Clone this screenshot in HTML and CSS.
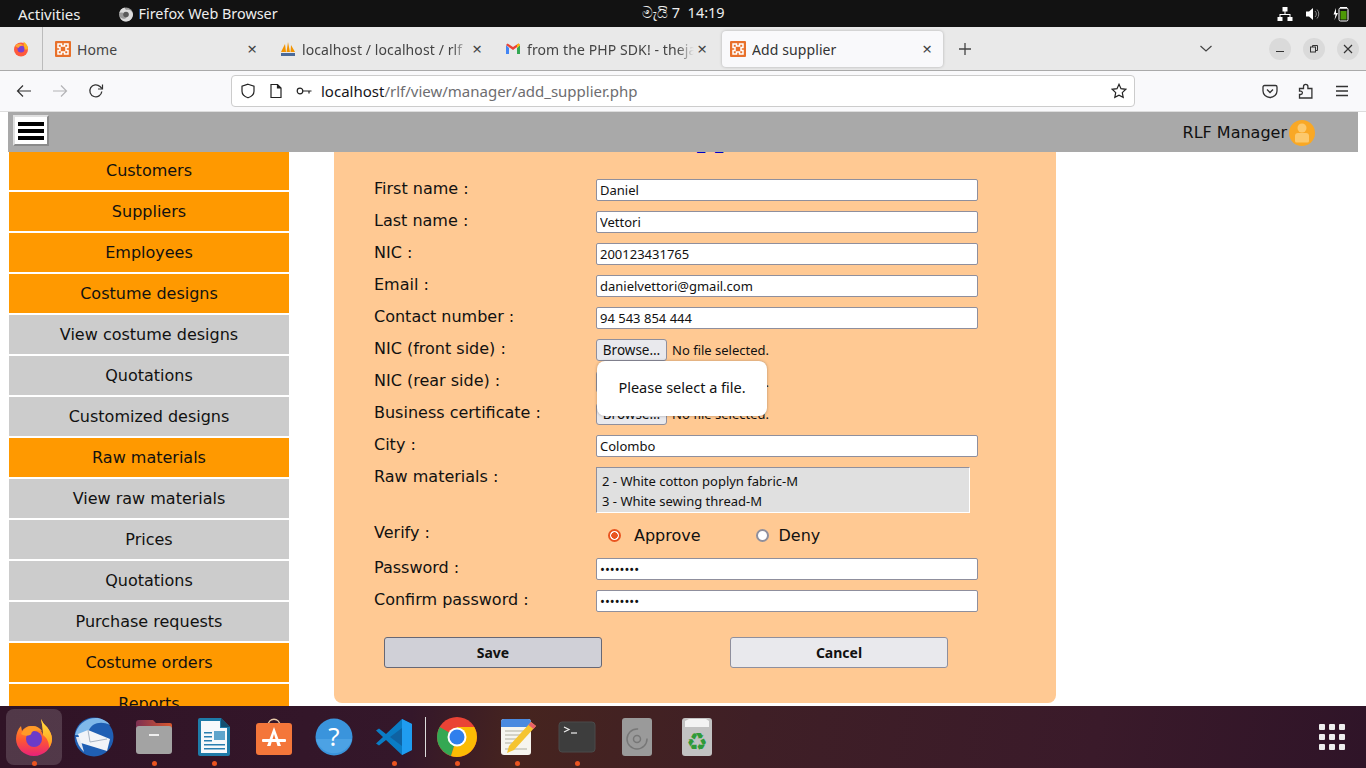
FILE: index.html
```html
<!DOCTYPE html>
<html lang="en">
  <head>
    <meta charset="UTF-8">
    <meta name="viewport" content="width=device-width, initial-scale=1.0">
    <title>Add supplier</title>
    <link rel="stylesheet" href="styles.css">
  </head>
<body>
  <!-- desktop top bar -->
  <div class="topbar">
    <div class="topbar-left">
      <span class="activities">Activities</span>
      <span class="app-name">
        <svg class="app-glyph" width="16" height="16" viewBox="0 0 16 16"><circle cx="8" cy="8.500" r="7" fill="#9a9a9a"/><path d="M1.500 7C2 4 4 2 6.500 1.500 7 3 7.500 3.500 8.500 4 11 3 14 4.500 15 8c0 4-3 7.500-7 7.500-3 0-5.500-2-6-4.500 2 2 5 2.500 6.500.500C9.500 10 8 8.500 6 8.500 6 7 5 6 1.500 7z" fill="#dcdcdc"/><circle cx="8" cy="8.500" r="2.800" fill="#5a5a5a"/></svg>
        Firefox Web Browser
      </span>
    </div>
    <div class="clock">මැයි 7&nbsp;&nbsp;14:19</div>
    <div class="tray">
      <svg width="16" height="16" viewBox="0 0 16 16" fill="#fff"><rect x="5.500" y="1" width="5" height="4.500"/><rect x="0.500" y="11" width="5" height="4"/><rect x="10.500" y="11" width="5" height="4"/><path d="M7.500 5h1v3h5v3h-1V9h-9v2h-1V8h5z"/></svg>
      <svg width="16" height="16" viewBox="0 0 16 16" fill="#fff"><path d="M1 5.500h3L8 2v12l-4-3.500H1z"/><path d="M10 5a4 4 0 0 1 0 6M12 3.500a6.500 6.500 0 0 1 0 9" fill="none" stroke="#888" stroke-width="1"/></svg>
      <svg width="16" height="16" viewBox="0 0 16 16"><path d="M3 2L0.500 8.500h2L1.500 14 5 7H3z" fill="#fff"/><rect x="6" y="2" width="9" height="13" rx="1.500" fill="none" stroke="#fff"/><rect x="7" y="1" width="7" height="1.500" fill="#fff"/><rect x="7.500" y="5" width="6" height="8.500" fill="#4e9a06"/></svg>
    </div>
  </div>

  <!-- browser tab strip -->
  <div class="tabstrip">
    <div class="fx-button">
      <svg width="16" height="16" viewBox="0 0 16 16"><circle cx="8" cy="8.500" r="7" fill="#ff5a3c"/><path d="M10.500 .5c3 2 5 5 4.500 8h-4z" fill="#ffb01f"/><circle cx="8" cy="8" r="3.500" fill="#7b3fd0"/><path d="M2 5c2-2.500 6-3 8.500-.5-3 0-4.500 1-5 2.500z" fill="#ffa436"/></svg>
    </div>
    <div class="tab">
      <svg class="fav" width="16" height="16" viewBox="0 0 16 16"><rect width="16" height="16" rx="1" fill="#e8702a"/><path d="M3 3h3.500v2h3V3H13v3.500h-2v3h2V13H9.500v-2h-3v2H3V9.500h2v-3H3z" fill="none" stroke="#fff" stroke-width="1.500"/></svg>
      <span class="tab-title">Home</span>
      <span class="tab-close">×</span>
    </div>
    <div class="tab">
      <svg class="fav" width="16" height="16" viewBox="0 0 16 16"><path d="M1 11L5 3l1 8zM6.500 11L8 1l2 10zM10.500 11L11 4l4 7z" fill="#f29400"/><rect x="1" y="12" width="14" height="3" fill="#4a6a9a"/></svg>
      <span class="tab-title fade">localhost / localhost / rlf |</span>
      <span class="tab-close">×</span>
    </div>
    <div class="tab">
      <svg class="fav" width="16" height="16" viewBox="0 0 16 16"><path d="M1 4v9h3V7z" fill="#4285f4"/><path d="M12 7v6h3V4z" fill="#34a853"/><path d="M1 4l7 5 7-5-1.500-1.500L8 6 2.500 2.500z" fill="#ea4335"/><path d="M12 7l3-3-1.500-1.500L12 3.700z" fill="#fbbc04"/></svg>
      <span class="tab-title fade">from the PHP SDK! - theja</span>
      <span class="tab-close">×</span>
    </div>
    <div class="tab active">
      <svg class="fav" width="16" height="16" viewBox="0 0 16 16"><rect width="16" height="16" rx="1" fill="#e8702a"/><path d="M3 3h3.500v2h3V3H13v3.500h-2v3h2V13H9.500v-2h-3v2H3V9.500h2v-3H3z" fill="none" stroke="#fff" stroke-width="1.500"/></svg>
      <span class="tab-title">Add supplier</span>
      <span class="tab-close">×</span>
    </div>
    <div class="new-tab">
      <svg width="14" height="14" viewBox="0 0 14 14" stroke="#444" stroke-width="1.300"><path d="M7 1v12M1 7h12"/></svg>
    </div>
    <div class="tab-list">
      <svg width="14" height="8" viewBox="0 0 14 8" fill="none" stroke="#444" stroke-width="1.200"><path d="M1.500 1l5.500 5 5.500-5"/></svg>
    </div>
    <div class="window-buttons">
      <span class="win-btn"><svg width="10" height="10" viewBox="0 0 10 10" stroke="#333"><path d="M1 7.500h8"/></svg></span>
      <span class="win-btn"><svg width="10" height="10" viewBox="0 0 10 10" fill="none" stroke="#333"><rect x="1.500" y="3" width="5" height="5"/><path d="M3.500 3V1.500h5v5H6.500"/></svg></span>
      <span class="win-btn"><svg width="10" height="10" viewBox="0 0 10 10" stroke="#333" stroke-width="1.200"><path d="M1 1l8 8M9 1l-8 8"/></svg></span>
    </div>
  </div>

  <!-- browser toolbar -->
  <div class="toolbar">
    <div class="nav-buttons">
      <svg width="16" height="16" viewBox="0 0 16 16" fill="none" stroke="#333" stroke-width="1.200"><path d="M15 8H1.500M7 2.500L1.500 8 7 13.500"/></svg>
      <svg width="16" height="16" viewBox="0 0 16 16" fill="none" stroke="#b4b4b6" stroke-width="1.200"><path d="M1 8h13.500M9 2.500L14.500 8 9 13.500"/></svg>
      <svg width="16" height="16" viewBox="0 0 16 16" fill="none" stroke="#333" stroke-width="1.300"><path d="M13.800 8.500A6 6 0 1 1 12 3.500L14 5.500"/><path d="M14.500 1.500v4.500h-4.500" stroke-width="1.200"/></svg>
    </div>
    <div class="urlbar">
      <svg width="16" height="16" viewBox="0 0 16 16" fill="none" stroke="#222" stroke-width="1.200"><path d="M8 1.200l6 2v5c0 3-3 5.500-6 6.600-3-1.100-6-3.600-6-6.600v-5z"/></svg>
      <svg width="16" height="16" viewBox="0 0 16 16" fill="none" stroke="#222" stroke-width="1.200"><path d="M3 1.500h6.500L13 5v9.500H3z"/><path d="M9.500 1.500V5H13" fill="#222"/></svg>
      <svg width="16" height="16" viewBox="0 0 16 16" fill="none" stroke="#222" stroke-width="1.200"><circle cx="4" cy="8" r="2.800"/><path d="M7 8h8.500M13 8v2.500"/></svg>
      <span class="url"><span class="url-host">localhost</span>/rlf/view/manager/add_supplier.php</span>
      <svg class="url-star" width="16" height="16" viewBox="0 0 16 16" fill="none" stroke="#222" stroke-width="1.200"><path d="M8 1.300l2 4.400 4.800.6-3.500 3.300.9 4.800L8 12.100l-4.200 2.300.9-4.800L1.200 6.300 6 5.700z"/></svg>
    </div>
    <div class="toolbar-right">
      <svg width="16" height="16" viewBox="0 0 16 16" fill="none" stroke="#333" stroke-width="1.300"><path d="M2.500 2.500h11a1.500 1.500 0 0 1 1.500 1.500v4a7 6.500 0 0 1-14 0V4a1.500 1.500 0 0 1 1.500-1.500z"/><path d="M5 6.500l3 3 3-3"/></svg>
      <svg width="16" height="16" viewBox="0 0 16 16" fill="none" stroke="#333" stroke-width="1.300"><path d="M1.500 5.500h4v-2a2.200 2.200 0 0 1 4.400 0v2h4v9.500H1.500v-3.500h1.200a1.700 1.700 0 0 0 0-3.400H1.500z"/></svg>
      <svg width="16" height="16" viewBox="0 0 16 16" stroke="#333" stroke-width="1.300"><path d="M2 3.500h12M2 8h12M2 12.500h12"/></svg>
    </div>
  </div>

  <!-- page content -->
  <div class="viewport">
    <header class="site-header">
      <button class="menu-toggle" type="button"><span></span><span></span><span></span></button>
      <div class="user">
        <span>RLF Manager</span>
        <span class="avatar">
          <svg width="18" height="20" viewBox="0 0 18 20" fill="#fcc96d"><circle cx="9" cy="5" r="4.500"/><path d="M2 18v-5a3 3 0 0 1 3-3h8a3 3 0 0 1 3 3v5a1.500 1.500 0 0 1-1.500 1.500h-11A1.500 1.500 0 0 1 2 18z"/></svg>
        </span>
      </div>
    </header>

    <div class="columns">
      <nav class="sidebar">
        <a class="side-link main">Customers</a>
        <a class="side-link main">Suppliers</a>
        <a class="side-link main">Employees</a>
        <a class="side-link main">Costume designs</a>
        <a class="side-link">View costume designs</a>
        <a class="side-link">Quotations</a>
        <a class="side-link">Customized designs</a>
        <a class="side-link main">Raw materials</a>
        <a class="side-link">View raw materials</a>
        <a class="side-link">Prices</a>
        <a class="side-link">Quotations</a>
        <a class="side-link">Purchase requests</a>
        <a class="side-link main">Costume orders</a>
        <a class="side-link main">Reports</a>
      </nav>

      <main class="panel">
        <h2 class="panel-title">Add supplier</h2>
        <form class="supplier-form">
          <div class="row">
            <label>First name :</label>
            <input type="text" value="Daniel">
          </div>
          <div class="row">
            <label>Last name :</label>
            <input type="text" value="Vettori">
          </div>
          <div class="row">
            <label>NIC :</label>
            <input type="text" value="200123431765">
          </div>
          <div class="row">
            <label>Email :</label>
            <input type="text" value="danielvettori@gmail.com">
          </div>
          <div class="row">
            <label>Contact number :</label>
            <input type="text" value="94 543 854 444">
          </div>
          <div class="row">
            <label>NIC (front side) :</label>
            <div class="file-field">
              <button class="browse" type="button">Browse…</button>
              <span>No file selected.</span>
              <div class="file-tip">Please select a file.</div>
            </div>
          </div>
          <div class="row">
            <label>NIC (rear side) :</label>
            <div class="file-field">
              <button class="browse" type="button">Browse…</button>
              <span>No file selected.</span>
            </div>
          </div>
          <div class="row">
            <label>Business certificate :</label>
            <div class="file-field">
              <button class="browse" type="button">Browse…</button>
              <span>No file selected.</span>
            </div>
          </div>
          <div class="row">
            <label>City :</label>
            <input type="text" value="Colombo">
          </div>
          <div class="row">
            <label>Raw materials :</label>
            <div class="listbox">
              <div>2 - White cotton poplyn fabric-M</div>
              <div>3 - White sewing thread-M</div>
            </div>
          </div>
          <div class="row verify-row">
            <label>Verify :</label>
            <div class="radios">
              <span class="radio-item approve"><span class="radio on"></span>Approve</span>
              <span class="radio-item deny"><span class="radio"></span>Deny</span>
            </div>
          </div>
          <div class="row">
            <label>Password :</label>
            <input type="password" value="daniel12">
          </div>
          <div class="row">
            <label>Confirm password :</label>
            <input type="password" value="daniel12">
          </div>
          <div class="form-actions">
            <button class="action hover" type="button">Save</button>
            <button class="action" type="button">Cancel</button>
          </div>
        </form>
      </main>
    </div>
  </div>

  <!-- desktop dock -->
  <div class="dock">
    <div class="dock-item focused running">
      <svg width="36" height="38" viewBox="0 0 36 38"><defs><linearGradient id="fx" x1="0" y1="0" x2="0" y2="1"><stop offset="0" stop-color="#ffb020"/><stop offset=".55" stop-color="#ff5a30"/><stop offset="1" stop-color="#e8207a"/></linearGradient><linearGradient id="fxtop" x1="0" y1="0" x2="0" y2="1"><stop offset="0" stop-color="#ffe040"/><stop offset="1" stop-color="#ff9a1c"/></linearGradient></defs><path d="M25 1c2 4 3 5 6 8 3 4 5 8 5 12 0 9-8 17-18 17S0 30 0 21C0 16 2 11 5 8l1 5c2-3 5-5 9-5 6 0 11 4 12 9 0-6-1-11-2-16z" fill="url(#fx)"/><path d="M25 1c2 4 3 5 6 8 3 4 5 8 5 12 0 3-1 6-3 9 0-6-2-10-6-13 0-6-1-11-2-16z" fill="url(#fxtop)"/><circle cx="18" cy="21" r="8" fill="#6b3bc9"/><path d="M5 16c2-5 7-8 12-8 4 0 7 2 9 5-4-1-8-1-10 1-1 1 0 2-2 3-3 1-6 1-9-1z" fill="#ff9a28"/></svg>
    </div>
    <div class="dock-item">
      <svg width="40" height="40" viewBox="0 0 40 40"><circle cx="20" cy="20" r="19.500" fill="#1f5fb4"/><path d="M1 18C3 8 12 0 24 1c5 1 9 3 12 7-6-3-12-3-17 0-4 3-5 7-5 10z" fill="#7fb8ea"/><path d="M2 20c1 6 4 11 8 15h0l-4-15z" fill="#dfe6f2"/><path d="M4 17l10-4 22 9-3 12-26-8z" fill="#f2f4f8"/><path d="M14 13l2 12 17-3" fill="none" stroke="#a8b4c4"/></svg>
    </div>
    <div class="dock-item running">
      <svg width="38" height="36" viewBox="0 0 38 36"><defs><linearGradient id="folder" x1="0" y1="0" x2="1" y2="0"><stop offset="0" stop-color="#7c2f52"/><stop offset="1" stop-color="#d9572e"/></linearGradient></defs><path d="M1 4a3 3 0 0 1 3-3h14l3 3h14a2 2 0 0 1 2 2v10H1z" fill="url(#folder)"/><rect x="1" y="7" width="36" height="28" rx="3" fill="#a3a3a3"/><rect x="14" y="15" width="10" height="2" fill="#eee"/></svg>
    </div>
    <div class="dock-item running">
      <svg width="32" height="38" viewBox="0 0 32 38"><path d="M2 0h21l9 9v27a2 2 0 0 1-2 2H2a2 2 0 0 1-2-2V2a2 2 0 0 1 2-2z" fill="#1e7ba8"/><path d="M3 3h19v7h7v25H3z" fill="#f7f9fb"/><path d="M23 0l9 9h-9z" fill="#124f70"/><rect x="6" y="14" width="8" height="1.500" fill="#2a7fb0"/><rect x="6" y="18" width="8" height="1.500" fill="#2a7fb0"/><rect x="6" y="22" width="8" height="1.500" fill="#2a7fb0"/><rect x="16" y="13" width="11" height="9" fill="#5fa5cc"/><rect x="6" y="26" width="21" height="1.500" fill="#2a7fb0"/><rect x="6" y="30" width="21" height="1.500" fill="#2a7fb0"/></svg>
    </div>
    <div class="dock-item">
      <svg width="38" height="38" viewBox="0 0 38 38"><path d="M13 8c0-9 12-9 12 0" fill="none" stroke="#e8c9a8" stroke-width="1.500"/><rect x="1" y="5" width="36" height="32" rx="3" fill="#f4763a"/><path d="M19 9l-7 19h3.500L19 16l3.500 12H26z" fill="#fff"/><rect x="7" y="21" width="24" height="3" rx="1" fill="#fff"/></svg>
    </div>
    <div class="dock-item">
      <svg width="38" height="38" viewBox="0 0 38 38"><circle cx="19" cy="19" r="18.500" fill="#3a94dc"/><path d="M1 21h36a18.500 18.500 0 0 1-36 0z" fill="#4ca2e4"/><text class="dock-help" x="19" y="28" text-anchor="middle">?</text></svg>
    </div>
    <div class="dock-item running">
      <svg width="36" height="36" viewBox="0 0 36 36"><path d="M26 0l10 5v26l-10 5-16-15-7 5.500L0 24.500 7 18 0 11.500 3 9.500 10 15z" fill="#0a7cc4"/><path d="M26 9L14 18l12 9z" fill="#0f5f9f" opacity=".9"/><path d="M26 0l10 5v26l-10 5z" fill="#1f9cf0"/></svg>
    </div>
    <span class="dock-sep"></span>
    <div class="dock-item running">
      <svg width="40" height="40" viewBox="0 0 40 40"><circle cx="20" cy="20" r="20" fill="#ea4335"/><path d="M20 20L2.700 10A20 20 0 0 0 14 39z" fill="#34a853"/><path d="M20 10h17.300A20 20 0 0 1 14 39l6-19z" fill="#fbbc04"/><circle cx="20" cy="20" r="9.500" fill="#fff"/><circle cx="20" cy="20" r="7.500" fill="#2f7fed"/></svg>
    </div>
    <div class="dock-item running">
      <svg width="38" height="38" viewBox="0 0 38 38"><rect x="3" y="1" width="30" height="36" rx="3" fill="#f6f5ef"/><path d="M3 9V4a3 3 0 0 1 3-3h24a3 3 0 0 1 3 3v5z" fill="#4a8ae0"/><path d="M7 13h22M7 17h16M7 21h12M7 25h8M7 31h22" stroke="#c8c6ba" stroke-width="1.500"/><path d="M33 4l5 4-22 24-7 3 2-7z" fill="#f5c430"/><path d="M33 4l5 4-2.500 3-5-4z" fill="#e8606a"/></svg>
    </div>
    <div class="dock-item running">
      <svg width="38" height="32" viewBox="0 0 38 32"><rect x="1" y="1" width="36" height="30" rx="3" fill="#3d3d3d" stroke="#4a4a4a"/><path d="M6 6l5 2.500-5 2.500" fill="none" stroke="#eee" stroke-width="1.200"/><path d="M13 12h6" stroke="#eee" stroke-width="1.200"/></svg>
    </div>
    <div class="dock-item">
      <svg width="32" height="38" viewBox="0 0 32 38"><rect width="30" height="38" x="1" rx="3" fill="#9a9a9a"/><circle cx="16" cy="21" r="10" fill="none" stroke="#777" stroke-width="1.500" stroke-dasharray="48 14"/><circle cx="16" cy="21" r="3.500" fill="none" stroke="#777" stroke-width="1.500"/></svg>
    </div>
    <div class="dock-item">
      <svg width="32" height="38" viewBox="0 0 32 38"><rect x="1" width="30" height="38" rx="3" fill="#c2c2c2"/><path d="M4 9V3l4-2h17l3 2v6z" fill="#f3f3f3"/><text class="dock-recycle" x="16" y="32" text-anchor="middle">♻</text></svg>
    </div>
    <div class="app-grid">
      <span></span><span></span><span></span>
      <span></span><span></span><span></span>
      <span></span><span></span><span></span>
    </div>
  </div>
</body>
</html>
```

FILE: styles.css
```css
html,
body {
  margin: 0;
  height: 100%;
  overflow: hidden;
}
body {
  display: flex;
  flex-direction: column;
  height: 768px;
  font-family: "Noto Sans", "DejaVu Sans", sans-serif;
  color: #111;
  background-color: #fff;
}

/* desktop top bar */
.topbar {
  display: flex;
  align-items: center;
  height: 27px;
  flex: none;
  padding: 0 17px 0 18px;
  background-color: #121212;
  color: #eee;
  font-size: 14.4px;
}
.topbar-left {
  display: flex;
  align-items: center;
  width: 624px;
  gap: 37px;
}
.activities {
  font-size: 15px;
}
.app-name {
  display: flex;
  align-items: center;
  gap: 5px;
}
.clock {
  font-size: 14.5px;
  margin-top: -3px;
}
.tray {
  display: flex;
  align-items: center;
  gap: 12px;
  margin-left: auto;
}

/* tab strip */
.tabstrip {
  display: flex;
  align-items: center;
  height: 44px;
  flex: none;
  padding-top: 1px;
  box-sizing: border-box;
  background-color: #e9e9e9;
  border-bottom: 1px solid #aaa;
  font-size: 14px;
  color: #444;
}
.fx-button {
  display: flex;
  justify-content: center;
  align-items: center;
  align-self: stretch;
  width: 42px;
  margin-top: -1px;
  margin-right: 2px;
  border-right: 1px solid #bbb;
}
.tab {
  display: flex;
  align-items: center;
  gap: 6px;
  width: 221px;
  height: 36px;
  margin: 0 2px;
  padding: 0 8px;
  box-sizing: border-box;
}
.tab.active {
  background-color: #f9f9fb;
  border-radius: 4px;
  box-shadow: 0 0 3px rgba(0, 0, 0, .25);
  color: #333;
}
.fav {
  flex: none;
}
.tab-title {
  flex: 1;
  overflow: hidden;
  white-space: nowrap;
  letter-spacing: .1px;
}
.tab-title.fade {
  margin-right: -6px;
  mask-image: linear-gradient(to right, #000 90%, transparent);
}
.tab-close {
  flex: none;
  width: 16px;
  text-align: center;
  font-size: 17px;
  line-height: 16px;
  color: #444;
}
.new-tab {
  display: flex;
  margin-left: 13px;
}
.tab-list {
  display: flex;
  margin-left: 227px;
}
.window-buttons {
  display: flex;
  gap: 12px;
  margin-left: 56px;
}
.win-btn {
  display: flex;
  justify-content: center;
  align-items: center;
  width: 22px;
  height: 22px;
  border-radius: 50%;
  background-color: #dadada;
}

/* toolbar */
.toolbar {
  display: flex;
  align-items: center;
  height: 40px;
  flex: none;
  background-color: #f9f9fb;
  border-bottom: 1px solid #ddd;
}
.nav-buttons {
  display: flex;
  gap: 20px;
  padding-left: 16px;
  width: 231px;
  box-sizing: border-box;
}
.urlbar {
  display: flex;
  align-items: center;
  gap: 12px;
  width: 904px;
  height: 32px;
  padding: 0 7px 0 8px;
  box-sizing: border-box;
  background-color: #fff;
  border: 1px solid #ccc;
  border-radius: 4px;
  font-size: 15px;
}
.url {
  flex: 1;
  margin-left: -3px;
  color: #6d6d70;
  white-space: nowrap;
}
.url-host {
  color: #15141a;
}
.toolbar-right {
  display: flex;
  gap: 20px;
  margin-left: 127px;
}

/* page */
.viewport {
  display: flex;
  flex-direction: column;
  height: 594px;
  flex: none;
  overflow: hidden;
}
.site-header {
  position: relative;
  z-index: 2;
  display: flex;
  justify-content: space-between;
  align-items: center;
  height: 40px;
  flex: none;
  margin: 0 8px;
  padding: 1px 43px 0 5px;
  box-sizing: border-box;
  background-color: #a9a9a9;
}
.menu-toggle {
  display: flex;
  flex-direction: column;
  justify-content: center;
  gap: 3px;
  width: 36px;
  height: 31px;
  margin-top: -4px;
  padding: 0 3px;
  background-color: #fff;
  border: 2px solid;
  border-color: #e0e0e0 #8a8a8a #8a8a8a #e0e0e0;
}
.menu-toggle span {
  display: block;
  width: 100%;
  height: 4px;
  background-color: #000;
}
.user {
  display: flex;
  align-items: center;
  gap: 2px;
  font-family: "DejaVu Sans", sans-serif;
  font-size: 16px;
}
.avatar {
  display: flex;
  justify-content: center;
  align-items: center;
  width: 26px;
  height: 26px;
  background-color: #f9a825;
  border-radius: 50%;
}
.columns {
  display: flex;
  align-items: flex-start;
  gap: 45px;
  padding-left: 9px;
}
.sidebar {
  display: flex;
  flex-direction: column;
  gap: 2px;
  width: 280px;
  flex: none;
  margin-top: -1px;
}
.side-link {
  display: flex;
  justify-content: center;
  align-items: center;
  height: 39px;
  background-color: #ccc;
  font-family: "DejaVu Sans", sans-serif;
  font-size: 16px;
  color: #111;
}
.side-link.main {
  background-color: #ff9900;
}

/* form panel */
.panel {
  width: 722px;
  height: 600px;
  margin-top: -49px;
  padding: 0 40px;
  box-sizing: border-box;
  background-color: #ffc993;
  border-radius: 0 0 8px 8px;
}
.panel-title {
  height: 76px;
  margin: 0;
  padding: 14px 12px 0 0;
  box-sizing: border-box;
  text-align: center;
  font-family: "Liberation Serif", serif;
  font-size: 32px;
  font-weight: bold;
  line-height: 36px;
  color: #0000c8;
}
.row {
  display: grid;
  grid-template-columns: 222px 382px;
  min-height: 22px;
  margin-bottom: 10px;
}
.row label {
  font-family: "DejaVu Sans", sans-serif;
  font-size: 16px;
  line-height: 20px;
  color: #111;
}
.row input {
  height: 22px;
  margin: 0;
  padding: 0 3px;
  box-sizing: border-box;
  background-color: #fff;
  border: 1px solid #8f8f9d;
  border-radius: 2px;
  font-family: "Noto Sans", sans-serif;
  font-size: 13px;
  color: #111;
}
.file-field {
  position: relative;
  display: flex;
  align-items: center;
  gap: 5px;
  font-size: 13px;
}
.browse {
  width: 71px;
  height: 22px;
  padding: 0;
  background-color: #e9e9ed;
  border: 1px solid #8f8f9d;
  border-radius: 3px;
  font-family: "Noto Sans", sans-serif;
  font-size: 13.5px;
  color: #111;
}
.file-tip {
  position: absolute;
  z-index: 1;
  top: 22px;
  left: 1px;
  width: 170px;
  height: 55px;
  display: flex;
  justify-content: center;
  align-items: center;
  padding-bottom: 4px;
  box-sizing: border-box;
  background-color: #fff;
  border-radius: 8px;
  box-shadow: 0 0 3px rgba(0, 0, 0, .3);
  font-size: 14.5px;
}
.listbox {
  display: flex;
  flex-direction: column;
  justify-content: center;
  gap: 2px;
  width: 374px;
  height: 46px;
  padding: 2px 5px 0;
  box-sizing: border-box;
  background-color: #e0e0e0;
  border: 1px solid;
  border-color: #8f8f9d #fff #fff #8f8f9d;
  font-size: 13px;
  line-height: 18px;
}
.verify-row {
  min-height: 25px;
}
.radios {
  display: flex;
  align-items: center;
  height: 25px;
  padding-left: 12px;
  font-family: "DejaVu Sans", sans-serif;
  font-size: 16px;
}
.radio-item {
  display: flex;
  align-items: center;
  gap: 13px;
}
.radio-item.approve {
  width: 147.5px;
}
.radio-item.deny {
  gap: 10px;
}
.radio {
  width: 13px;
  height: 13px;
  box-sizing: border-box;
  background-color: #fff;
  border: 2px solid #8f8f9d;
  border-radius: 50%;
}
.radio.on {
  border-color: #e95420;
  background: radial-gradient(circle, #e95420 3px, #fff 3.5px);
}
.form-actions {
  display: flex;
  gap: 128px;
  margin-top: 25px;
  padding-left: 10px;
}
.action {
  width: 218px;
  height: 31px;
  padding: 0;
  background-color: #e9e9ed;
  border: 1px solid #8f8f9d;
  border-radius: 3px;
  font-family: "Noto Sans", sans-serif;
  font-size: 14px;
  font-weight: bold;
  color: #111;
}
.action.hover {
  background-color: #d0d0d7;
  border-color: #676774;
}

/* dock */
.dock {
  display: flex;
  align-items: center;
  height: 62px;
  flex: none;
  padding-left: 4px;
  background: linear-gradient(100deg, #301326 0%, #34172a 30%, #46241f 38%, #3f1f26 55%, #3a1a2a 80%, #2f1428 100%);
}
.dock-item {
  position: relative;
  display: flex;
  justify-content: center;
  align-items: center;
  width: 60px;
  height: 56px;
  box-sizing: border-box;
}
.dock-item.focused::before {
  content: "";
  position: absolute;
  left: 2px;
  top: 0;
  width: 56px;
  height: 56px;
  background-color: rgba(255, 255, 255, .16);
  border-radius: 8px;
}
.dock-item svg {
  position: relative;
}
.dock-item.running::after {
  content: "";
  position: absolute;
  left: 28px;
  bottom: -1px;
  width: 5px;
  height: 5px;
  background-color: #e95420;
  border-radius: 50%;
}
.dock-help {
  font-family: "Noto Sans", sans-serif;
  font-size: 26px;
  fill: #fff;
}
.dock-recycle {
  font-family: "DejaVu Sans", sans-serif;
  font-size: 24px;
  fill: #2f9a38;
}
.dock-sep {
  width: 1px;
  height: 40px;
  margin: 0 1px;
  background-color: #ddd;
}
.app-grid {
  display: grid;
  grid-template-columns: repeat(3, 6px);
  gap: 4px;
  margin-left: auto;
  margin-right: 21px;
}
.app-grid span {
  width: 6px;
  height: 6px;
  background-color: #eee;
  border-radius: 1px;
}
```
